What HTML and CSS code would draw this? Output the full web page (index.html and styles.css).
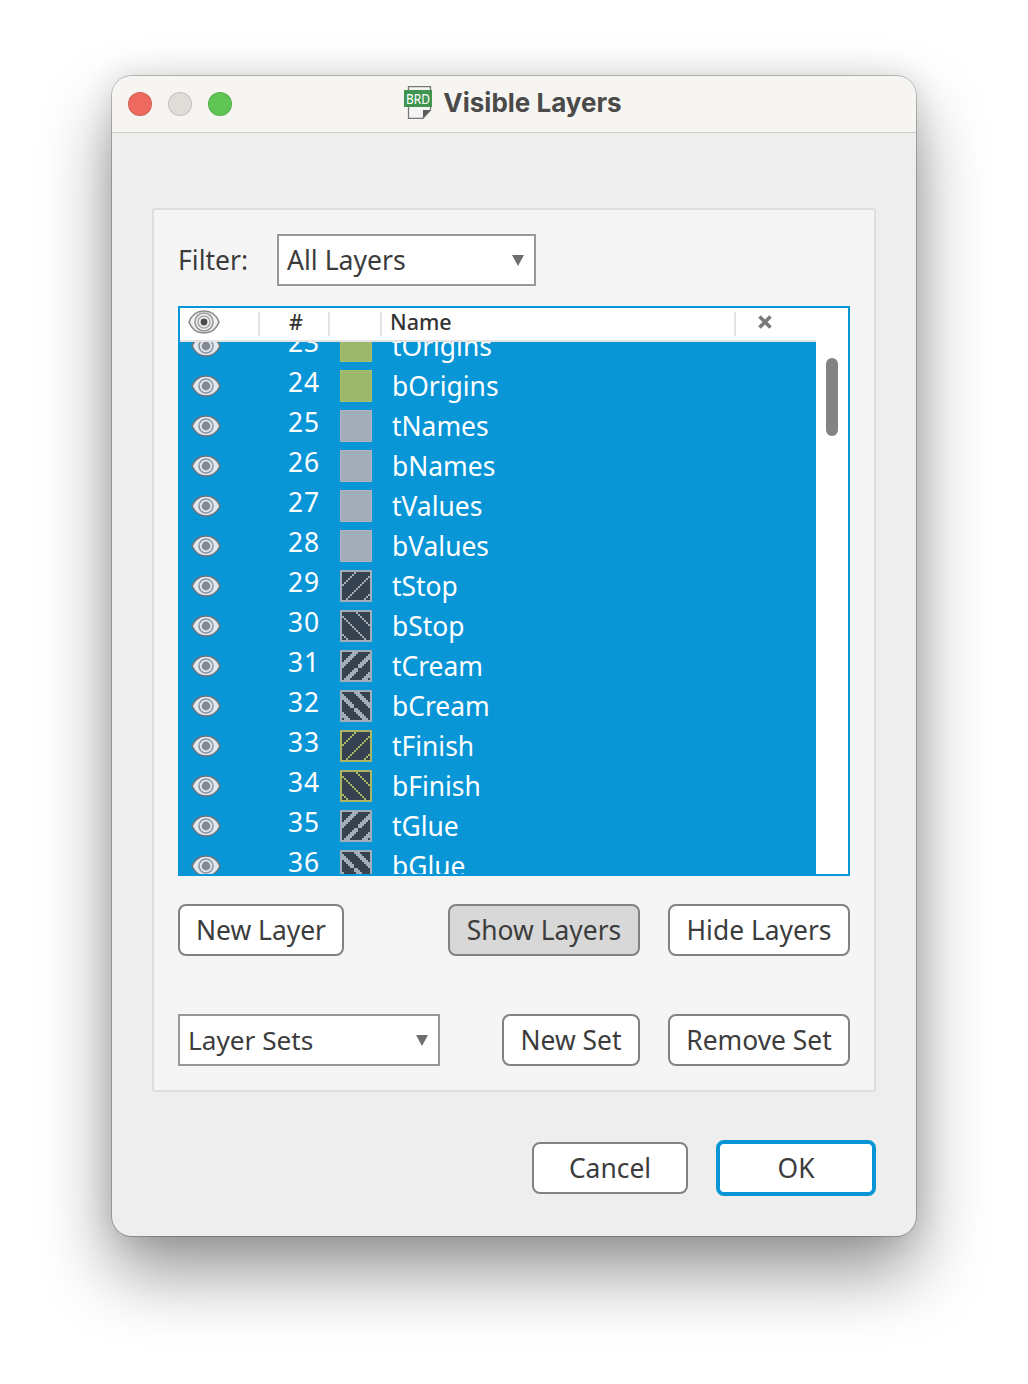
FILE: index.html
```html
<!DOCTYPE html>
<html lang="en">
<head>
<meta charset="utf-8">
<title>Visible Layers</title>
<link rel="stylesheet" href="styles.css">
</head>
<body>
<svg class="defs" width="0" height="0" aria-hidden="true">
  <defs>
    <symbol id="eye" viewBox="0 0 30 22">
      <path d="M1 11C4 4 9 1 15 1s11 3 14 10c-3 7-9 10-14 10S4 18 1 11Z" fill="#dfe8f3" stroke="#6f7278" stroke-width="1.6"/>
      <circle cx="15" cy="11" r="7" fill="none" stroke="#92959b" stroke-width="1.6"/>
      <circle cx="15" cy="11" r="4.4" fill="#85888e"/>
    </symbol>
    <symbol id="eye-head" viewBox="0 0 32 24">
      <path d="M1 12C4 4 10 1 16 1s12 3 15 11c-3 8-9 11-15 11S4 20 1 12Z" fill="#f0f0f0" stroke="#8a8a8a" stroke-width="1.6"/>
      <circle cx="16" cy="12" r="9" fill="none" stroke="#9a9a9a" stroke-width="1.6"/>
      <circle cx="16" cy="12" r="6" fill="none" stroke="#a8a8a8" stroke-width="1.6"/>
      <circle cx="16" cy="12" r="3.4" fill="#4d4d4d"/>
    </symbol>

    <path id="c-thin" d="M0 16h2v2h-2zM2 14h2v2h-2zM4 12h2v2h-2zM6 10h2v2h-2zM8 8h2v2h-2zM10 6h2v2h-2zM12 4h2v2h-2zM14 2h2v2h-2zM16 0h2v2h-2z"/>
    <path id="c-thick" d="M0 16h2v2h-2zM2 14h2v2h-2zM4 12h2v2h-2zM6 10h2v2h-2zM8 8h2v2h-2zM10 6h2v2h-2zM12 4h2v2h-2zM14 2h2v2h-2zM16 0h2v2h-2zM2 16h2v2h-2zM4 14h2v2h-2zM6 12h2v2h-2zM8 10h2v2h-2zM10 8h2v2h-2zM12 6h2v2h-2zM14 4h2v2h-2zM16 2h2v2h-2zM0 14h2v2h-2zM2 12h2v2h-2zM4 10h2v2h-2zM6 8h2v2h-2zM8 6h2v2h-2zM10 4h2v2h-2zM12 2h2v2h-2zM14 0h2v2h-2z"/>

    <pattern id="p-stop-t" width="18" height="18" patternUnits="userSpaceOnUse"><use href="#c-thin" fill="#a3adb9"/></pattern>
    <pattern id="p-stop-b" width="18" height="18" patternUnits="userSpaceOnUse" patternTransform="translate(32 0) scale(-1 1)"><use href="#c-thin" fill="#a3adb9"/></pattern>
    <pattern id="p-cream-t" width="18" height="18" patternUnits="userSpaceOnUse"><use href="#c-thick" fill="#a3adb9"/></pattern>
    <pattern id="p-cream-b" width="18" height="18" patternUnits="userSpaceOnUse" patternTransform="translate(32 0) scale(-1 1)"><use href="#c-thick" fill="#a3adb9"/></pattern>
    <pattern id="p-finish-t" width="18" height="18" patternUnits="userSpaceOnUse"><use href="#c-thin" fill="#aab566"/></pattern>
    <pattern id="p-finish-b" width="18" height="18" patternUnits="userSpaceOnUse" patternTransform="translate(32 0) scale(-1 1)"><use href="#c-thin" fill="#aab566"/></pattern>

    <symbol id="s-stop-t" viewBox="0 0 32 32">
      <rect width="32" height="32" fill="#36424f"/>
      <rect width="32" height="32" fill="url(#p-stop-t)"/>
      <rect x="1" y="1" width="30" height="30" fill="none" stroke="#a3adb9" stroke-width="2"/>
    </symbol>
    <symbol id="s-stop-b" viewBox="0 0 32 32">
      <rect width="32" height="32" fill="#36424f"/>
      <rect width="32" height="32" fill="url(#p-stop-b)"/>
      <rect x="1" y="1" width="30" height="30" fill="none" stroke="#a3adb9" stroke-width="2"/>
    </symbol>
    <symbol id="s-cream-t" viewBox="0 0 32 32">
      <rect width="32" height="32" fill="#36424f"/>
      <rect width="32" height="32" fill="url(#p-cream-t)"/>
      <rect x="1" y="1" width="30" height="30" fill="none" stroke="#a3adb9" stroke-width="2"/>
    </symbol>
    <symbol id="s-cream-b" viewBox="0 0 32 32">
      <rect width="32" height="32" fill="#36424f"/>
      <rect width="32" height="32" fill="url(#p-cream-b)"/>
      <rect x="1" y="1" width="30" height="30" fill="none" stroke="#a3adb9" stroke-width="2"/>
    </symbol>
    <symbol id="s-finish-t" viewBox="0 0 32 32">
      <rect width="32" height="32" fill="#36424f"/>
      <rect width="32" height="32" fill="url(#p-finish-t)"/>
      <rect x="1" y="1" width="30" height="30" fill="none" stroke="#aab566" stroke-width="2"/>
    </symbol>
    <symbol id="s-finish-b" viewBox="0 0 32 32">
      <rect width="32" height="32" fill="#36424f"/>
      <rect width="32" height="32" fill="url(#p-finish-b)"/>
      <rect x="1" y="1" width="30" height="30" fill="none" stroke="#aab566" stroke-width="2"/>
    </symbol>
  </defs>
</svg>

<main class="window">
  <header class="titlebar">
    <div class="lights">
      <span class="light light-red"></span>
      <span class="light light-grey"></span>
      <span class="light light-green"></span>
    </div>
    <div class="title">
      <svg class="doc-icon" width="28" height="33" viewBox="0 0 28 33">
        <path d="M4.5 .7H26.5V24L19 32.3H4.5Z" fill="#f4f4f4" stroke="#777" stroke-width="1.3"/>
        <path d="M19 32V24H27Z" fill="#5c5c5c"/>
        <rect x="0" y="4" width="28" height="17" fill="#3f9450"/>
        <text x="14" y="17.5" class="doc-text" text-anchor="middle" textLength="24" lengthAdjust="spacingAndGlyphs">BRD</text>
      </svg>
      <span class="title-text">Visible Layers</span>
    </div>
  </header>

  <section class="content">
    <div class="panel">
      <div class="filter-row">
        <span class="filter-label">Filter:</span>
        <div class="combo combo-filter"><span>All Layers</span><i class="arrow"></i></div>
      </div>

      <div class="table">
        <div class="thead">
          <div class="th th-eye"><svg class="eye-head"><use href="#eye-head"/></svg></div>
          <div class="th th-num">#</div>
          <div class="th th-swatch"></div>
          <div class="th th-name">Name</div>
          <div class="th th-x"><svg width="14" height="14" viewBox="0 0 14 14"><path d="M1.5 1.5 12.5 12.5M12.5 1.5 1.5 12.5" stroke="#7a7a7a" stroke-width="3.6"/></svg></div>
        </div>
        <div class="tbody">
          <div class="rows">
            <div class="row"><svg class="eye"><use href="#eye"/></svg><span class="num">23</span><span class="swatch sw-green"></span><span class="name">tOrigins</span></div>
            <div class="row"><svg class="eye"><use href="#eye"/></svg><span class="num">24</span><span class="swatch sw-green"></span><span class="name">bOrigins</span></div>
            <div class="row"><svg class="eye"><use href="#eye"/></svg><span class="num">25</span><span class="swatch sw-grey"></span><span class="name">tNames</span></div>
            <div class="row"><svg class="eye"><use href="#eye"/></svg><span class="num">26</span><span class="swatch sw-grey"></span><span class="name">bNames</span></div>
            <div class="row"><svg class="eye"><use href="#eye"/></svg><span class="num">27</span><span class="swatch sw-grey"></span><span class="name">tValues</span></div>
            <div class="row"><svg class="eye"><use href="#eye"/></svg><span class="num">28</span><span class="swatch sw-grey"></span><span class="name">bValues</span></div>
            <div class="row"><svg class="eye"><use href="#eye"/></svg><span class="num">29</span><svg class="swatch"><use href="#s-stop-t"/></svg><span class="name">tStop</span></div>
            <div class="row"><svg class="eye"><use href="#eye"/></svg><span class="num">30</span><svg class="swatch"><use href="#s-stop-b"/></svg><span class="name">bStop</span></div>
            <div class="row"><svg class="eye"><use href="#eye"/></svg><span class="num">31</span><svg class="swatch"><use href="#s-cream-t"/></svg><span class="name">tCream</span></div>
            <div class="row"><svg class="eye"><use href="#eye"/></svg><span class="num">32</span><svg class="swatch"><use href="#s-cream-b"/></svg><span class="name">bCream</span></div>
            <div class="row"><svg class="eye"><use href="#eye"/></svg><span class="num">33</span><svg class="swatch"><use href="#s-finish-t"/></svg><span class="name">tFinish</span></div>
            <div class="row"><svg class="eye"><use href="#eye"/></svg><span class="num">34</span><svg class="swatch"><use href="#s-finish-b"/></svg><span class="name">bFinish</span></div>
            <div class="row"><svg class="eye"><use href="#eye"/></svg><span class="num">35</span><svg class="swatch"><use href="#s-cream-t"/></svg><span class="name">tGlue</span></div>
            <div class="row"><svg class="eye"><use href="#eye"/></svg><span class="num">36</span><svg class="swatch"><use href="#s-cream-b"/></svg><span class="name">bGlue</span></div>
          </div>
          <div class="scrollbar"><span class="thumb"></span></div>
        </div>
      </div>

      <div class="btn-row btn-row-layers">
        <button class="btn btn-new-layer">New Layer</button>
        <span class="spacer"></span>
        <button class="btn btn-show btn-active">Show Layers</button>
        <button class="btn btn-hide">Hide Layers</button>
      </div>

      <div class="btn-row btn-row-sets">
        <div class="combo combo-sets"><span>Layer Sets</span><i class="arrow"></i></div>
        <span class="spacer"></span>
        <button class="btn btn-new-set">New Set</button>
        <button class="btn btn-remove">Remove Set</button>
      </div>
    </div>

    <footer class="footer">
      <button class="btn btn-cancel">Cancel</button>
      <button class="btn btn-ok">OK</button>
    </footer>
  </section>
</main>
</body>
</html>
```

FILE: styles.css
```css
* { box-sizing: border-box; }

html, body { margin: 0; height: 100%; }

body {
  width: 1028px;
  height: 1384px;
  overflow: hidden;
  background: #fff;
  padding: 76px 112px 0;
  font-family: "Noto Sans", "Liberation Sans", sans-serif;
  color: #3c3c3c;
}

.defs { display: block; width: 0; height: 0; }

.window {
  width: 804px;
  height: 1160px;
  border-radius: 20px;
  background: #eeeeee;
  box-shadow: 0 0 0 1px rgba(0, 0, 0, .22), 0 36px 70px rgba(0, 0, 0, .42), 0 0 30px rgba(0, 0, 0, .12);
  display: flex;
  flex-direction: column;
  overflow: hidden;
}

.titlebar {
  height: 57px;
  flex: none;
  background: #f7f5f1;
  border-bottom: 1px solid #cfcfcf;
  display: flex;
  align-items: center;
  justify-content: center;
  padding-bottom: 4px;
  position: relative;
}

.lights {
  position: absolute;
  left: 16px;
  top: 16px;
  display: flex;
  gap: 16px;
}

.light {
  width: 24px;
  height: 24px;
  border-radius: 50%;
  border: 1px solid rgba(0, 0, 0, .12);
}
.light-red { background: #ee6a5f; }
.light-grey { background: #dfddd8; }
.light-green { background: #61c554; }

.title {
  display: flex;
  align-items: center;
  gap: 11px;
  margin-left: -2px;
}

.doc-icon { display: block; }
.doc-text { font: 15px "Noto Sans", sans-serif; fill: #fff; }

.title-text {
  font: 700 26px "Inter", sans-serif;
  color: #4a4a4a;
}

.content {
  flex: 1;
  padding: 75px 40px 0;
  display: flex;
  flex-direction: column;
}

.panel {
  height: 884px;
  background: #f5f5f5;
  border: 2px solid #dedede;
  border-radius: 3px;
  padding: 24px 24px 0;
}

.filter-row {
  display: flex;
  align-items: center;
  height: 52px;
  gap: 26px;
  font-size: 26.6px;
}

.filter-label { width: 73px; }

.combo {
  background: #fff;
  border: 2px solid #979797;
  display: flex;
  align-items: center;
  justify-content: space-between;
  font-size: 26.6px;
  height: 52px;
}
.combo-filter { width: 259px; padding: 0 10px 0 8px; }
.combo-sets { width: 262px; height: 52px; padding: 0 10px 0 8px; font-size: 26.2px; }

.arrow {
  width: 0;
  height: 0;
  border-left: 6px solid transparent;
  border-right: 6px solid transparent;
  border-top: 11px solid #6e6e6e;
}

.table {
  margin-top: 20px;
  width: 672px;
  height: 570px;
  background: #fff;
  border: 2px solid #0996d7;
  display: flex;
  flex-direction: column;
}

.thead {
  height: 32px;
  flex: none;
  display: flex;
  align-items: center;
  font-size: 21.5px;
  font-weight: 500;
  color: #333;
  position: relative;
  z-index: 1;
  background: #fff;
}

.th {
  height: 24px;
  padding-bottom: 5px;
  display: flex;
  align-items: center;
  border-right: 2px solid #e4e4e4;
}
.th-eye { width: 80px; padding-left: 8px; }
.th-num { width: 70px; padding-left: 29px; }
.th-swatch { width: 52px; }
.th-name { width: 354px; padding-left: 8px; }
.th-x { border-right: 0; padding-left: 22px; }

.eye-head { width: 32px; height: 24px; flex: none; }

.tbody {
  flex: 1;
  min-height: 0;
  display: flex;
  overflow: hidden;
}

.rows {
  width: 636px;
  flex: none;
  background: #0996d7;
  border-top: 2px solid #e4e4e4;
  overflow: hidden;
  color: #fff;
}

.row {
  height: 40px;
  display: flex;
  align-items: center;
  font-size: 26.4px;
}
.row:first-child { margin-top: -16px; }

.eye {
  width: 30px;
  height: 22px;
  margin-left: 11px;
  flex: none;
}

.num {
  width: 33px;
  margin-left: 67px;
  flex: none;
  padding-bottom: 8px;
  letter-spacing: 1px;
}

.swatch {
  display: block;
  width: 32px;
  height: 32px;
  margin-left: 19px;
  flex: none;
}
.sw-green { background: #9bb86c; border: 1px solid #a8bf6a; }
.sw-grey { background: #a3adb9; border: 1px solid #b3b4c4; }

.name { margin-left: 20px; }

.scrollbar {
  flex: 1;
  background: #fff;
  padding: 18px 0 0 10px;
}

.thumb {
  display: block;
  width: 12px;
  height: 78px;
  border-radius: 6px;
  background: #838383;
}

.btn-row {
  display: flex;
  align-items: center;
  width: 672px;
  height: 52px;
  gap: 28px;
}
.btn-row-layers { margin-top: 28px; }
.btn-row-sets { margin-top: 58px; }

.spacer { flex: 1; }

.btn {
  height: 52px;
  background: #fff;
  border: 2px solid #828282;
  border-radius: 8px;
  font: inherit;
  font-size: 26.4px;
  color: #3c3c3c;
  padding: 0;
}
.btn-active { background: #d8d8d8; }
.btn-new-layer { width: 166px; }
.btn-show { width: 192px; }
.btn-hide { width: 182px; }
.btn-new-set { width: 138px; }
.btn-remove { width: 182px; }

.footer {
  display: flex;
  justify-content: flex-end;
  align-items: center;
  gap: 28px;
  margin-top: 48px;
}
.btn-cancel { width: 156px; }
.btn-ok {
  width: 160px;
  height: 56px;
  border: 4px solid #0996d7;
  border-radius: 8px;
}
```
